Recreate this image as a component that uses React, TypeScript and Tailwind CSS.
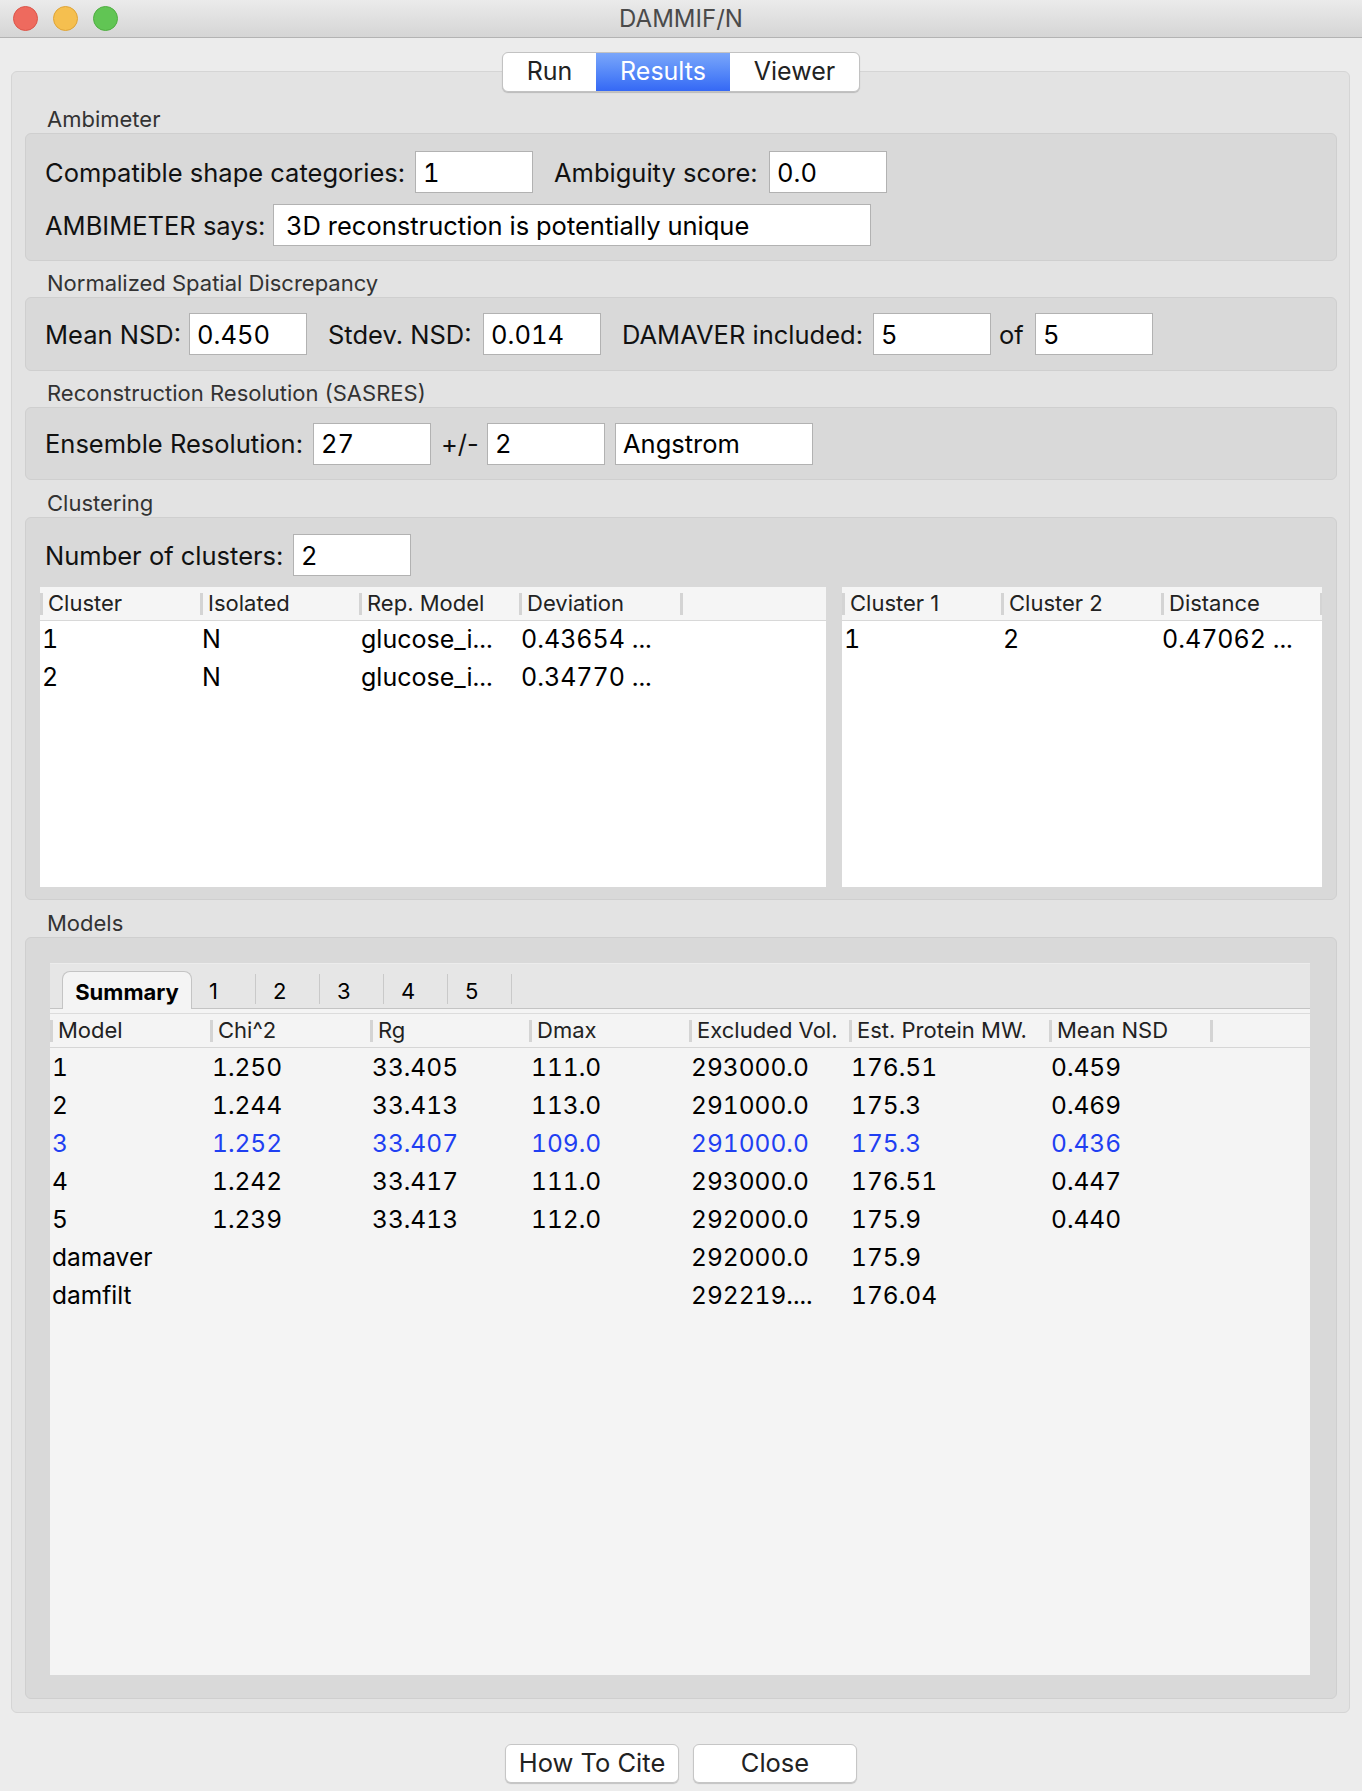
import React from "react";

// DAMMIF/N results window

const clusterRows = [
  ["1", "N", "glucose_i...", "0.43654 ..."],
  ["2", "N", "glucose_i...", "0.34770 ..."],
];

const modelRows = [
  ["1", "1.250", "33.405", "111.0", "293000.0", "176.51", "0.459"],
  ["2", "1.244", "33.413", "113.0", "291000.0", "175.3", "0.469"],
  ["3", "1.252", "33.407", "109.0", "291000.0", "175.3", "0.436"],
  ["4", "1.242", "33.417", "111.0", "293000.0", "176.51", "0.447"],
  ["5", "1.239", "33.413", "112.0", "292000.0", "175.9", "0.440"],
  ["damaver", "", "", "", "292000.0", "175.9", ""],
  ["damfilt", "", "", "", "292219....", "176.04", ""],
];

const Field = ({ value, className }: { value: string; className: string }) => (
  <div
    className={`flex h-[42px] shrink-0 items-center border border-[#b2b2b2] bg-white pl-[7px] pt-[2px] text-[25.5px] tabular-nums text-black ${className}`}
  >
    {value}
  </div>
);

const Label = ({ text, className }: { text: string; className: string }) => (
  <span className={`shrink-0 whitespace-nowrap pt-[2px] text-[25.5px] text-[#111] ${className}`}>{text}</span>
);

const GroupTitle = ({ title, className }: { title: string; className: string }) => (
  <div className={`flex items-end pb-[2px] pl-[22px] text-[22px] leading-[24px] text-[#333] ${className}`}>
    {title}
  </div>
);

const Th = ({ label }: { label: string }) => (
  <div className="flex items-center overflow-hidden">
    <span className="h-[22px] w-[3px] shrink-0 bg-[#d4d4d4]" />
    <span className="ml-[5px] whitespace-nowrap">{label}</span>
  </div>
);

const TitleBar = () => (
  <div className="grid h-[38px] shrink-0 grid-cols-[1fr_auto_1fr] items-center border-b border-[#b3b3b3] bg-linear-to-b from-[#ebebeb] to-[#d5d5d5]">
    <div className="flex gap-[15px] pl-[13px]">
      <span className="h-[25px] w-[25px] rounded-full border border-[#dc5549] bg-[#ee6a5e]" />
      <span className="h-[25px] w-[25px] rounded-full border border-[#dfa436] bg-[#f5bf4f]" />
      <span className="h-[25px] w-[25px] rounded-full border border-[#4fae41] bg-[#61c554]" />
    </div>
    <span className="text-[24px] text-[#4a4a4a]">DAMMIF/N</span>
    <div />
  </div>
);

const App = () => {
  return (
    <div className="flex h-[1791px] w-[1362px] flex-col bg-[#ececec] font-[Inter,sans-serif] text-black">
      <TitleBar />

      <div className="ml-[11px] mt-[33px] flex w-[1339px] flex-col rounded-[6px] border border-[#d5d5d5] bg-[#e3e3e3] pb-[13px] pl-[13px] pr-[12px]">
        {/* Run / Results / Viewer */}
        <div className="relative z-10 -mt-[20px] flex h-[40px] self-center overflow-hidden rounded-[6px] border border-[#c2c2c2] bg-white text-[25px] shadow-[0_1px_1px_rgba(0,0,0,0.18)]">
          <div className="flex w-[93px] items-center justify-center text-[#222]">Run</div>
          <div className="flex w-[134px] items-center justify-center bg-linear-to-b from-[#7aa6fa] to-[#3568f5] text-white">
            Results
          </div>
          <div className="flex w-[129px] items-center justify-center text-[#222]">Viewer</div>
        </div>

        <GroupTitle title="Ambimeter" className="h-[41px]" />
        <div className="flex flex-col gap-[11px] rounded-[6px] border border-[#cfcfcf] bg-[#d9d9d9] pb-[14px] pl-[19px] pt-[17px]">
          <div className="flex h-[42px] items-center">
            <Label text="Compatible shape categories:" className="w-[359px]" />
            <Field value="1" className="ml-[11px] w-[118px]" />
            <Label text="Ambiguity score:" className="ml-[21px] w-[204px]" />
            <Field value="0.0" className="ml-[11px] w-[118px]" />
          </div>
          <div className="flex h-[42px] items-center">
            <Label text="AMBIMETER says:" className="w-[217px]" />
            <Field value="3D reconstruction is potentially unique" className="ml-[11px] w-[598px] pl-[12px]" />
          </div>
        </div>

        <GroupTitle title="Normalized Spatial Discrepancy" className="h-[36px]" />
        <div className="flex h-[74px] items-center rounded-[6px] border border-[#cfcfcf] bg-[#d9d9d9] pl-[19px]">
          <Label text="Mean NSD:" className="w-[133px]" />
          <Field value="0.450" className="ml-[11px] w-[118px]" />
          <Label text="Stdev. NSD:" className="ml-[21px] w-[144px]" />
          <Field value="0.014" className="ml-[11px] w-[118px]" />
          <Label text="DAMAVER included:" className="ml-[21px] w-[240px]" />
          <Field value="5" className="ml-[11px] w-[118px]" />
          <Label text="of" className="ml-[8px] w-[25px]" />
          <Field value="5" className="ml-[11px] w-[118px]" />
        </div>

        <GroupTitle title="Reconstruction Resolution (SASRES)" className="h-[36px]" />
        <div className="flex h-[73px] items-center rounded-[6px] border border-[#cfcfcf] bg-[#d9d9d9] pl-[19px]">
          <Label text="Ensemble Resolution:" className="w-[257px]" />
          <Field value="27" className="ml-[11px] w-[118px]" />
          <Label text="+/-" className="ml-[10px] w-[35px]" />
          <Field value="2" className="ml-[11px] w-[118px]" />
          <Field value="Angstrom" className="ml-[10px] w-[198px]" />
        </div>

        <GroupTitle title="Clustering" className="h-[37px]" />
        <div className="flex flex-col rounded-[6px] border border-[#cfcfcf] bg-[#d9d9d9] px-[14px] pb-[12px] pt-[16px]">
          <div className="flex h-[42px] items-center pl-[5px]">
            <Label text="Number of clusters:" className="w-[237px]" />
            <Field value="2" className="ml-[11px] w-[118px]" />
          </div>
          <div className="mt-[11px] flex gap-[16px]">
            <div className="flex h-[300px] w-[786px] flex-col bg-white">
              <div className="grid h-[34px] shrink-0 grid-cols-[160px_159px_160px_161px_1fr] border-b border-[#d8d8d8] bg-[#f5f5f5] text-[22px] text-[#222]">
                <Th label="Cluster" />
                <Th label="Isolated" />
                <Th label="Rep. Model" />
                <Th label="Deviation" />
                <Th label="" />
              </div>
              {clusterRows.map((row) => (
                <div
                  key={row[0]}
                  className="grid h-[38px] grid-cols-[160px_159px_160px_161px_1fr] items-center text-[25px] tabular-nums"
                >
                  {row.map((cell, i) => (
                    <span key={i} className="whitespace-nowrap pl-[2px]">
                      {cell}
                    </span>
                  ))}
                </div>
              ))}
            </div>
            <div className="flex h-[300px] w-[480px] flex-col bg-white">
              <div className="grid h-[34px] shrink-0 grid-cols-[159px_160px_159px_1fr] border-b border-[#d8d8d8] bg-[#f5f5f5] text-[22px] text-[#222]">
                <Th label="Cluster 1" />
                <Th label="Cluster 2" />
                <Th label="Distance" />
                <Th label="" />
              </div>
              <div className="grid h-[38px] grid-cols-[159px_160px_159px_1fr] items-center text-[25px] tabular-nums">
                <span className="pl-[2px]">1</span>
                <span className="pl-[2px]">2</span>
                <span className="whitespace-nowrap pl-[1px]">0.47062 ...</span>
                <span />
              </div>
            </div>
          </div>
        </div>

        <GroupTitle title="Models" className="h-[37px]" />
        <div className="flex flex-col rounded-[6px] border border-[#cfcfcf] bg-[#d9d9d9] pb-[23px] pl-[24px] pr-[26px] pt-[25px]">
          <div className="flex h-[712px] flex-col bg-[#f4f4f4]">
            {/* tab bar */}
            <div className="flex h-[46px] shrink-0 items-end border-b border-t border-[#c4c4c4] border-t-[#ececec] bg-[#e6e6e6] pl-[12px] text-[22px]">
              <div className="-mb-px flex h-[38px] w-[130px] items-center justify-center rounded-t-[8px] border border-b-0 border-[#c4c4c4] bg-[#f4f4f4] pt-[4px] font-bold">
                Summary
              </div>
              {["1", "2", "3", "4", "5"].map((t) => (
                <div key={t} className="flex h-[38px] w-[64px] items-center pt-[4px]">
                  <span className="pl-[17px]">{t}</span>
                  <span className="ml-auto h-[30px] w-px self-start bg-[#c9c9c9]" />
                </div>
              ))}
            </div>
            <div className="h-[5px] shrink-0 border-b border-[#dcdcdc]" />
            {/* summary table */}
            <div className="grid h-[34px] shrink-0 grid-cols-[160px_160px_159px_160px_160px_200px_161px_1fr] border-b border-[#d6d6d6] text-[22px] text-[#222]">
              <Th label="Model" />
              <Th label="Chi^2" />
              <Th label="Rg" />
              <Th label="Dmax" />
              <Th label="Excluded Vol." />
              <Th label="Est. Protein MW." />
              <Th label="Mean NSD" />
              <Th label="" />
            </div>
            {modelRows.map((row) => (
              <div
                key={row[0]}
                className={`grid h-[38px] grid-cols-[160px_160px_159px_160px_160px_200px_161px_1fr] items-center text-[24.5px] tabular-nums ${
                  row[0] === "3" ? "text-[#1f3ff2]" : "text-black"
                }`}
              >
                {row.map((cell, i) => (
                  <span key={i} className="whitespace-nowrap pl-[2px]">
                    {cell}
                  </span>
                ))}
                <span />
              </div>
            ))}
          </div>
        </div>
      </div>

      <div className="mt-[31px] flex justify-center gap-[14px] text-[25.5px] text-[#222]">
        <button className="flex h-[39px] w-[174px] items-center justify-center rounded-[6px] border border-[#c6c6c6] bg-white shadow-[0_1px_1px_rgba(0,0,0,0.18)]">
          How To Cite
        </button>
        <button className="flex h-[39px] w-[164px] items-center justify-center rounded-[6px] border border-[#c6c6c6] bg-white shadow-[0_1px_1px_rgba(0,0,0,0.18)]">
          Close
        </button>
      </div>
    </div>
  );
};

export default App;
